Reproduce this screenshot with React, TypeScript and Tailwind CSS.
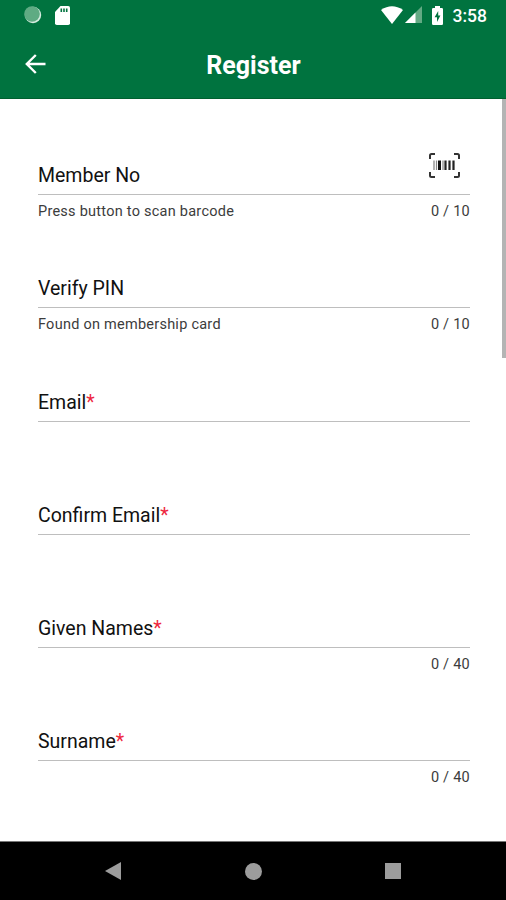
import React from "react";

interface IFieldProps {
  label: string;
  required?: boolean;
  hint?: string;
  counter?: string;
  scannable?: boolean;
}

const fields: IFieldProps[] = [
  { label: "Member No", hint: "Press button to scan barcode", counter: "0 / 10", scannable: true },
  { label: "Verify PIN", hint: "Found on membership card", counter: "0 / 10" },
  { label: "Email", required: true },
  { label: "Confirm Email", required: true },
  { label: "Given Names", required: true, counter: "0 / 40" },
  { label: "Surname", required: true, counter: "0 / 40" },
];

const BarcodeIcon = () => (
  <svg width="31" height="25" viewBox="0 0 31 25" fill="none">
    <path
      d="M1 6V2.5Q1 1 2.5 1H6M25 1H28.5Q30 1 30 2.5V6M30 19V22.5Q30 24 28.5 24H25M6 24H2.5Q1 24 1 22.5V19"
      stroke="#333"
      strokeWidth="2"
    />
    <path d="M5 7.5V17" stroke="#aaa" strokeWidth="1.8" />
    <path d="M7.5 7.5V17M14 7.5V17" stroke="#888" strokeWidth="1.2" />
    <path d="M10.5 7.5V17" stroke="#111" strokeWidth="3" />
    <path d="M16.5 7.5V17M20.5 7.5V17M24.5 7.5V17" stroke="#222" strokeWidth="2.2" />
  </svg>
);

function StatusBar() {
  return (
    <div className="flex h-[30px] items-center pr-[19px] pl-6">
      <svg width="18" height="18" viewBox="0 0 18 18">
        <circle cx="9" cy="9" r="8.2" fill="#d6ece0" />
        <circle cx="8" cy="8" r="7.8" fill="#5fab83" />
      </svg>
      <svg className="ml-[13px]" width="15" height="19" viewBox="0 0 15 19">
        <path fill="#fff" d="M5.5 0H13.2Q15 0 15 1.8V17.2Q15 19 13.2 19H1.8Q0 19 0 17.2V6Z" />
        <path stroke="#00733f" strokeWidth="1.6" d="M6.3 2.5V6M9 2.5V6M11.7 2.5V6" />
      </svg>
      <div className="ml-auto flex items-center">
        <svg width="22" height="18" viewBox="0 0 22 18">
          <path fill="#fff" d="M0 4Q11-3.5 22 4L11 18Z" />
        </svg>
        <svg className="ml-[2px]" width="18" height="18" viewBox="0 0 18 18">
          <path fill="#63aa84" d="M17 0V17H0Z" />
          <path fill="#fff" d="M10.5 6.5V17H0Z" />
        </svg>
        <svg className="ml-[9px]" width="11" height="19" viewBox="0 0 11 19">
          <path fill="#fff" d="M3 0H8V2H9.8Q11 2 11 3.2V17.8Q11 19 9.8 19H1.2Q0 19 0 17.8V3.2Q0 2 1.2 2H3Z" />
          <path fill="#00733f" d="M6.2 5L2.6 11.2H5V16L8.4 9.6H6.2Z" />
        </svg>
        <span className="ml-[10px] pt-[3px] text-[17.5px] leading-none font-medium">3:58</span>
      </div>
    </div>
  );
}

function Field({ label, required, hint, counter, scannable }: IFieldProps) {
  return (
    <div className="h-[113.3px]">
      <div className="flex h-12 items-start justify-between border-b border-[#bebebe]">
        <label className="pt-[17px] text-[19.5px] leading-6 text-[#111]">
          {label}
          {required && <span className="text-[#ee2740]">*</span>}
        </label>
        {scannable && (
          <button className="mt-[6px] mr-[10px]">
            <BarcodeIcon />
          </button>
        )}
      </div>
      <div className="flex justify-between pt-[7px] text-[14.5px] leading-5 tracking-[0.25px] text-[#3c3c3c]">
        <span>{hint}</span>
        <span>{counter}</span>
      </div>
    </div>
  );
}

export default function App() {
  return (
    <div className="flex h-[900px] w-[506px] flex-col overflow-hidden bg-white font-[Roboto,sans-serif]">
      <header className="h-[99px] shrink-0 border-b border-[#00602f] bg-[#00733f] text-white">
        <StatusBar />
        <div className="grid h-[68px] grid-cols-[1fr_auto_1fr] items-center px-[25px]">
          <svg width="21" height="20" viewBox="0 0 21 20" fill="none" stroke="#fff" strokeWidth="2.4">
            <path d="M20.5 10H2M10.8 1L1.8 10L10.8 19" />
          </svg>
          <h1 className="pt-[2px] pl-px text-[25px] leading-none font-bold">Register</h1>
        </div>
      </header>
      <main className="flex min-h-0 flex-1 overflow-hidden">
        <form className="flex-1 pt-12 pr-9 pl-[38px]">
          {fields.map((field) => (
            <Field key={field.label} {...field} />
          ))}
        </form>
        <div className="-ml-1 h-[259px] w-1 bg-[#b4b4b4]" />
      </main>
      <nav className="grid h-[59px] shrink-0 grid-cols-[113px_140px_140px_113px] items-center border-t border-[#777] bg-black">
        <svg className="ml-[105px]" width="16" height="18" viewBox="0 0 16 18">
          <path fill="#9c9c9c" d="M0 9L16 0V18Z" />
        </svg>
        <div className="col-start-2 ml-[132px] size-[17px] rounded-full bg-[#9c9c9c]" />
        <div className="col-start-3 ml-[132px] size-4 bg-[#9c9c9c]" />
      </nav>
    </div>
  );
}
